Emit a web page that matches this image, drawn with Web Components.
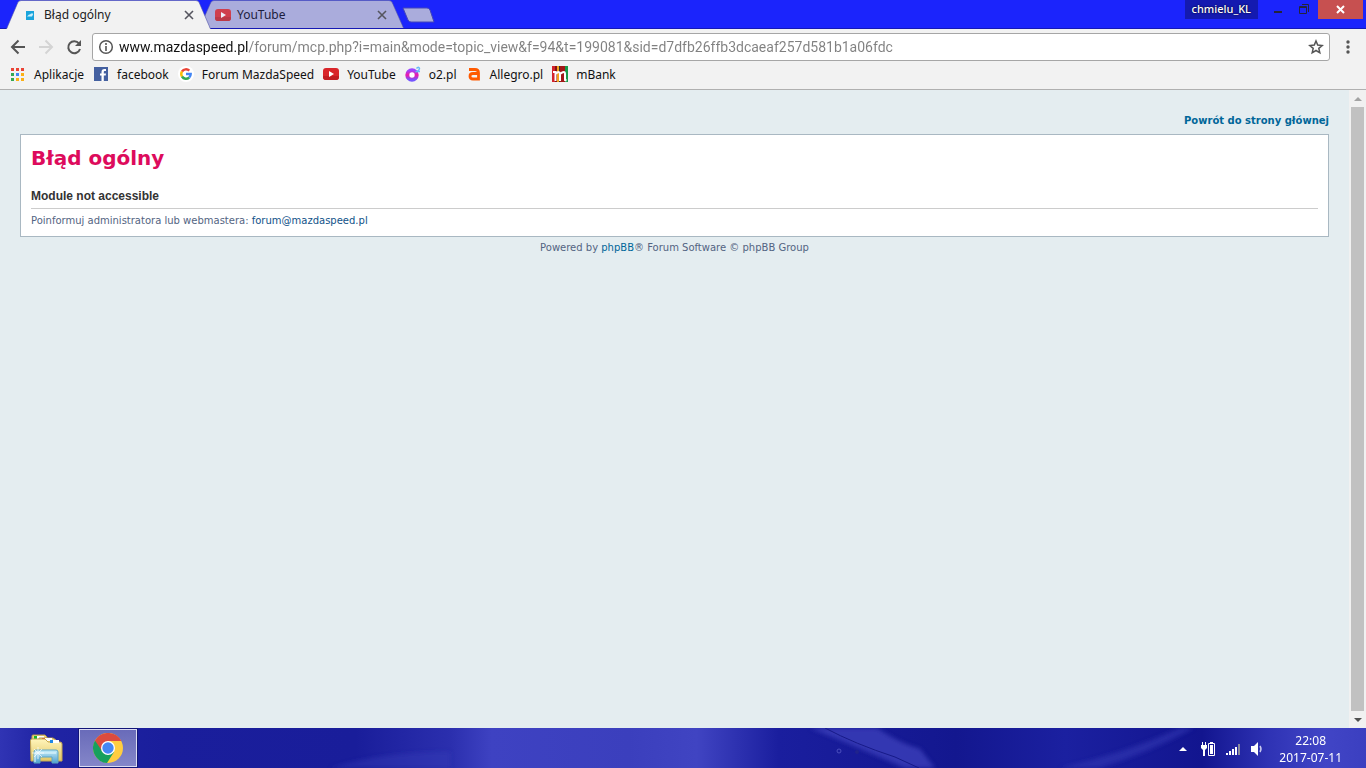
<!DOCTYPE html>
<html lang="pl">
<head>
<meta charset="utf-8">
<title>Błąd ogólny</title>
<style>
body {
	margin: 0;
	background: #e4edf0;
	font-family: "Noto Sans", "Open Sans", sans-serif;
	font-size: 12px;
}
</style>
</head>
<body>
<desktop-screen>
	<browser-window>
		<tab-strip slot="tabs" user="chmielu_KL">
			<browser-tab active label="Błąd ogólny"><site-icon name="mazda"></site-icon></browser-tab>
			<browser-tab label="YouTube"><site-icon name="youtube"></site-icon></browser-tab>
		</tab-strip>
		<address-bar slot="address" url="www.mazdaspeed.pl/forum/mcp.php?i=main&amp;mode=topic_view&amp;f=94&amp;t=199081&amp;sid=d7dfb26ffb3dcaeaf257d581b1a06fdc"></address-bar>
		<bookmark-bar slot="bookmarks">
			<book-mark icon="apps">Aplikacje</book-mark>
			<book-mark icon="facebook">facebook</book-mark>
			<book-mark icon="google">Forum MazdaSpeed</book-mark>
			<book-mark icon="youtube">YouTube</book-mark>
			<book-mark icon="o2">o2.pl</book-mark>
			<book-mark icon="allegro">Allegro.pl</book-mark>
			<book-mark icon="mbank">mBank</book-mark>
		</bookmark-bar>
		<error-page heading="Błąd ogólny" message="Module not accessible"></error-page>
	</browser-window>
	<task-bar slot="taskbar"></task-bar>
</desktop-screen>

<script>
const icons = {
	mazda: `<rect x="4" y="4" width="8" height="9" fill="#19a4dc"/><path d="M5 9.500l2-2h1l1-1h2v1l-1 2H5z" fill="#c9effc"/>`,
	youtube: `<rect y="2" width="16" height="12" rx="3" fill="#d9252a"/><path d="M0 10v1a3 3 0 0 0 3 3h10a3 3 0 0 0 3-3v-1z" fill="#c11d22"/><path d="M6 5l5 3-5 3z" fill="#fff"/>`,
	apps: `<path fill="#ea4335" d="M1 2h3v3H1zM6 2h3v3H6zM11 2h3v3h-3z"/><path fill="#34a853" d="M1 7h3v3H1zM1 12h3v3H1z"/><path fill="#4285f4" d="M6 7h3v3H6z"/><path fill="#fbb016" d="M11 7h3v3h-3zM6 12h3v3H6zM11 12h3v3h-3z"/>`,
	facebook: `<rect x="1" y="1" width="14" height="14" fill="#4460a0"/><path d="M8.500 15V9.500H7v-2h1.500V6c0-2 1-3 3-3H13v2h-1c-1 0-1.200.4-1.200 1.200v1.300H13l-.3 2h-1.900V15z" fill="#fff"/>`,
	google: `<circle cx="8" cy="8" r="8" fill="#fff"/><g fill="none" stroke-width="2.400"><path d="M4 5.500A4.700 4.700 0 0 1 11.300 4.700" stroke="#ea4335"/><path d="M4 5.500A4.700 4.700 0 0 0 4 10.500" stroke="#fbbc05"/><path d="M4 10.500A4.700 4.700 0 0 0 11.200 11.500" stroke="#34a853"/><path d="M11.200 11.500A4.700 4.700 0 0 0 12.700 8H8" stroke="#4285f4"/></g>`,
	o2: `<defs><linearGradient id="o" x2="0" y2="1"><stop stop-color="#9b45ff"/><stop offset=".5" stop-color="#ef17a8"/><stop offset="1" stop-color="#7555ff"/></linearGradient></defs><circle cx="7" cy="9" r="4.700" fill="#fff" stroke="url(#o)" stroke-width="4"/><path d="M11.500 2.500q2-2.500 3 0 0 1.500-2.500 3h3" fill="none" stroke="#65b9f8" stroke-width="1.500"/>`,
	allegro: `<path d="M3 3.500h6q3.500 0 3.500 3.500v7.500M12.500 7.500H7Q4 7.500 4 10.200T7 13h5.500" fill="none" stroke="#ff5a00" stroke-width="2.800"/>`,
	mbank: `<path fill="#d3242c" d="M0 0h16v16H0z"/><path fill="#851313" d="M3 0h2v16H3z"/><path fill="#f5a11c" d="M5 0h2v16H5z"/><path fill="#333" d="M7 0h1v16H7z"/><path fill="#a11717" d="M8 0h5v16H8z"/><path fill="#169b49" d="M13 0h3v16h-3z"/><path d="M1 6h2.500v9M3.500 8q4-4 4.500 0v7M8 8q5-4 5 0v6l1.500.5" fill="none" stroke="#fff" stroke-width="2"/>`
};

function render(host, html) {
	host.attachShadow({mode: 'open'}).innerHTML = html;
}

class SiteIcon extends HTMLElement {
	connectedCallback() {
		if (this.shadowRoot) return;
		render(this, `
	<style>
	:host { display: block; flex: none; width: 16px; height: 16px; }
	svg { display: block; width: 100%; height: 100%; }
	</style>
	<svg viewBox="0 0 16 16" aria-hidden="true">${icons[this.getAttribute('name')]}</svg>`);
	}
}

class DesktopScreen extends HTMLElement {
	constructor() {
		super();
		render(this, `
	<style>
	:host { display: flex; flex-direction: column; height: 100vh; overflow: hidden; }
	::slotted(browser-window) { flex: 1; min-height: 0; }
	</style>
	<slot></slot><slot name="taskbar"></slot>`);
	}
}

class BrowserWindow extends HTMLElement {
	constructor() {
		super();
		render(this, `
	<style>
	:host { display: flex; flex-direction: column; background: #f2f2f2; }
	.view { display: flex; flex: 1; min-height: 0; border-top: 1px solid #b0b0b0; }
	.page { flex: 1; min-width: 0; overflow: hidden; background: #e4edf0; }
	</style>
	<slot name="tabs"></slot>
	<slot name="address"></slot>
	<slot name="bookmarks"></slot>
	<div class="view">
		<div class="page"><slot></slot></div>
		<scroll-track></scroll-track>
	</div>`);
	}
}

class TabStrip extends HTMLElement {
	connectedCallback() {
		if (this.shadowRoot) return;
		render(this, `
	<style>
	:host { display: flex; height: 28px; padding-left: 6px; background: #1b24fc; border-bottom: 1px solid #1519b4; }
	button { border: 0; padding: 0; background: none; color: inherit; font: inherit; }
	.new { width: 33px; height: 16px; margin: 7px 0 0 -2px; }
	.controls { display: flex; align-items: flex-start; margin-left: auto; padding-right: 3px; }
	.user { padding: 0 7px 2px; height: 19px; background: #141ab0; color: #fff; font-size: 11px; font-weight: 500; text-shadow: 0 0 2px #000; }
	.box { width: 26px; height: 19px; }
	.user + .box { margin-left: 7px; }
	.close { width: 45px; height: 19px; background: #c75050; margin-left: 1px; }
	svg { display: block; margin: auto; }
	</style>
	<slot></slot>
	<button class="new" aria-label="Nowa karta"><svg width="33" height="16"><path d="M1 1h24q2 0 3 2l4 12H9q-2 0-3-2z" fill="#aaacdc" stroke="#4447b8"/></svg></button>
	<div class="controls">
		<button class="user">${this.getAttribute('user')}</button>
		<button class="box" aria-label="Minimalizuj"><svg width="26" height="19"><path d="M9 11h8v2H9z" fill="#24243c"/></svg></button>
		<button class="box" aria-label="Przywróć"><svg width="26" height="19"><path d="M8.500 6.500h7v7h-7zM11 4.500h6.500V12M8 7.500h8" fill="none" stroke="#24243c"/></svg></button>
		<button class="close" aria-label="Zamknij"><svg width="45" height="19"><path d="M19 6l7 7M26 6l-7 7" stroke="#fff" stroke-width="2"/></svg></button>
	</div>`);
	}
}

class BrowserTab extends HTMLElement {
	connectedCallback() {
		if (this.shadowRoot) return;
		render(this, `
	<style>
	:host { position: relative; display: flex; align-items: center; gap: 6px; box-sizing: border-box; width: 205px; height: 29px; padding: 0 14px 0 16px; color: #1c1d3d; --fill: #aaacdc; }
	:host([active]) { z-index: 1; color: #222; --fill: #f2f2f2; }
	:host(:not([active])) { margin-left: -12px; }
	:host(:not([active])) .shape { height: 28px; }
	:host(:not([active])) slot { opacity: .8; }
	.shape { position: absolute; inset: 0; width: 100%; height: 100%; }
	.shape path { fill: var(--fill); stroke: #4f52a8; stroke-opacity: .6; }
	slot, span, button { position: relative; }
	slot { display: block; }
	span { flex: 1; }
	button { width: 16px; height: 16px; padding: 0; border: 0; background: none; }
	button svg { display: block; }
	</style>
	<svg class="shape" viewBox="0 0 205 29" preserveAspectRatio="none"><path d="M0 29.500q1-1 2-4l9-21q1-4 4-4h175q3 0 4 4l9 21q1 3 2 4"/></svg>
	<slot></slot>
	<span>${this.getAttribute('label')}</span>
	<button aria-label="Zamknij kartę"><svg width="16" height="16"><path d="M4 4l8 8M12 4l-8 8" stroke="#55555f" stroke-width="1.600"/></svg></button>`);
	}
}

class AddressBar extends HTMLElement {
	connectedCallback() {
		if (this.shadowRoot) return;
		const url = this.getAttribute('url');
		render(this, `
	<style>
	:host { display: flex; align-items: center; padding: 4px 10px 3px 10px; }
	button { flex: none; width: 16px; height: 16px; padding: 0; border: 0; background: none; }
	svg { display: block; fill: none; stroke: #555; stroke-width: 2; }
	.nav { display: flex; gap: 12px; margin-right: 10px; }
	.field { flex: 1; display: flex; align-items: center; gap: 5px; height: 26px; padding: 0 5px; background: #fff; border: 1px solid #a6a6a6; border-radius: 3px; }
	input {
		flex: 1; min-width: 0; padding: 0; border: 0; outline: 0;
		font: 14px/24px Roboto, "Noto Sans", sans-serif; color: #808080;
		/* host name dark, the rest of the url grey */
		background: linear-gradient(to right, #111 var(--host), #808080 var(--host));
		-webkit-background-clip: text; background-clip: text;
		-webkit-text-fill-color: transparent;
	}
	.menu { margin-left: 10px; }
	</style>
	<div class="nav">
		<button aria-label="Wstecz"><svg width="16" height="16"><path d="M15 8H2.500M8.500 1.500L2 8l6.500 6.500"/></svg></button>
		<button aria-label="Dalej"><svg width="16" height="16" style="stroke:#d4d4d4"><path d="M1 8h12.500M7.500 1.500L14 8l-6.500 6.500"/></svg></button>
		<button aria-label="Odśwież"><svg width="16" height="16"><path d="M13 4.500A6 6 0 1 0 14 10"/><path d="M15 1v6H9z" fill="#555" stroke="none"/></svg></button>
	</div>
	<div class="field">
		<button aria-label="Informacje o stronie"><svg width="16" height="16"><circle cx="8" cy="8" r="6.300" stroke-width="1.500"/><path d="M8 7v5M8 4v2" stroke-width="1.600"/></svg></button>
		<input type="text" aria-label="Adres" spellcheck="false">
		<button aria-label="Dodaj zakładkę"><svg width="16" height="16"><path stroke-width="1.500" d="M8 2l1.700 4.100 4.500.4-3.400 2.900 1 4.400L8 11.500l-3.800 2.300 1-4.400-3.400-2.900 4.500-.4z"/></svg></button>
	</div>
	<button class="menu" aria-label="Menu"><svg width="16" height="16" style="fill:#555;stroke:none"><circle cx="8" cy="3" r="1.700"/><circle cx="8" cy="8" r="1.700"/><circle cx="8" cy="13" r="1.700"/></svg></button>`);

		const input = this.shadowRoot.querySelector('input');
		input.value = url;
		const ctx = document.createElement('canvas').getContext('2d');
		ctx.font = '14px Roboto, "Noto Sans", sans-serif';
		input.style.setProperty('--host', Math.round(ctx.measureText(url.split('/')[0]).width) + 'px');
	}
}

class BookmarkBar extends HTMLElement {
	constructor() {
		super();
		render(this, `
	<style>
	:host { display: flex; align-items: center; gap: 9px; height: 20px; padding: 0 10px 5px; }
	</style>
	<slot></slot>`);
	}
}

class BookMark extends HTMLElement {
	connectedCallback() {
		if (this.shadowRoot) return;
		render(this, `
	<style>
	a { display: flex; align-items: center; gap: 8px; color: #111; text-decoration: none; white-space: nowrap; }
	</style>
	<a href="#"><site-icon name="${this.getAttribute('icon')}"></site-icon><slot></slot></a>`);
	}
}

class ErrorPage extends HTMLElement {
	connectedCallback() {
		if (this.shadowRoot) return;
		render(this, `
	<style>
	:host { display: block; padding: 24px 20px; font: 10px/14px "DejaVu Sans", Verdana, sans-serif; color: #536482; }
	a { color: #006699; text-decoration: none; }
	.back { display: block; text-align: right; font-weight: bold; }
	main { margin-top: 6px; padding: 10px 10px 8px; background: #fff; border: 1px solid #a9b8c2; }
	h1 { margin: 0; color: #dd0b5c; font-size: 20px; line-height: 26px; }
	h2 { margin: 17px 0 4px; color: #333; font: bold 12px/16px "Liberation Sans", Arial, sans-serif; }
	p { margin: 0; padding-top: 5px; border-top: 1px solid #ccc; }
	footer { padding-top: 4px; text-align: center; }
	p a { color: #105289; }
	</style>
	<a class="back" href="#">Powrót do strony głównej</a>
	<main>
		<h1>${this.getAttribute('heading')}</h1>
		<h2>${this.getAttribute('message')}</h2>
		<p>Poinformuj administratora lub webmastera: <a href="mailto:forum@mazdaspeed.pl">forum@mazdaspeed.pl</a></p>
	</main>
	<footer>Powered by <a href="#">phpBB</a>® Forum Software © phpBB Group</footer>`);
	}
}

class ScrollTrack extends HTMLElement {
	constructor() {
		super();
		render(this, `
	<style>
	:host { display: flex; flex-direction: column; width: 17px; background: #f1f1f1; }
	button { height: 17px; padding: 0; border: 0; background: none; }
	svg { display: block; }
	.thumb { flex: 1; margin: 0 2px; background: #c1c1c1; }
	</style>
	<button aria-label="W górę"><svg width="17" height="17"><path d="M5 11l4-4 4 4z" fill="#a3a3a3"/></svg></button>
	<div class="thumb"></div>
	<button aria-label="W dół"><svg width="17" height="17"><path d="M5 7l4 4 4-4z" fill="#505050"/></svg></button>`);
	}
}

class TaskBar extends HTMLElement {
	constructor() {
		super();
		render(this, `
	<style>
	:host { position: relative; display: flex; align-items: center; height: 40px; color: #fff; background: linear-gradient(90deg, #3034b4 0, #2024a4 3%, #1a1e9c 12%, #191d9a 26%, #2b2fae 33%, #3e42c2 36%, #3b3fbd 46%, #4044c2 51%, #1a1e9e 57%, #13178f 70%, #1b20a0 78%, #12158f 88%, #2f33b5 93%, #4145c6 97%, #3b3fc0 100%); }
	.wall { position: absolute; inset: 0; width: 100%; height: 100%; }
	button { position: relative; padding: 0; border: 0; background: none; }
	svg { display: block; }
	.files { width: 34px; margin: 3px 0 0 29px; }
	.chrome { width: 58px; height: 38px; margin-left: 16px; border: 1px solid #dcdcf2; background: linear-gradient(#696bb9, #8486c9); outline: 1px solid #111579; }
	.chrome svg { margin: auto; }
	.tray { position: relative; display: flex; align-items: center; gap: 9px; margin-left: auto; padding: 2px 24px 0 0; }
	.clock { margin-left: 4px; text-align: center; line-height: 17px; }
	</style>
	<svg class="wall" viewBox="0 0 1366 40" preserveAspectRatio="none" aria-hidden="true">
		<defs><filter id="soft"><feGaussianBlur stdDeviation="2"/></filter></defs>
		<g filter="url(#soft)">
			<path d="M810 0h67q22 15 43 21l15 19h-30q-55-24-95-40z" fill="#3b40b9" opacity=".8"/>
			<path d="M1060 40q65-15 120-40h14q-45 25-95 40z" fill="#3338b3" opacity=".6"/>
			<path d="M330 40q50-16 120-16v16z" fill="#393db8" opacity=".4"/>
		</g>
		<path d="M825 0q30 16 70 29l24 11" fill="none" stroke="#171a88"/>
		<circle cx="839" cy="23" r="2" fill="none" stroke="#4b4fbd"/><circle cx="857" cy="24" r="2" fill="#20238c"/>
	</svg>
	<button class="files" aria-label="Eksplorator plików">
		<svg width="34" height="32" viewBox="0 0 34 32">
			<defs><linearGradient id="f" x2="0" y2="1"><stop stop-color="#fff5bb"/><stop offset="1" stop-color="#e2c767"/></linearGradient>
			<linearGradient id="b" x2="0" y2="1"><stop stop-color="#c6eefa"/><stop offset="1" stop-color="#4f9fce"/></linearGradient></defs>
			<path d="M3 7V2q0-1 1-1h12l2 2v5z" fill="#eed883" stroke="#b99b4b"/><path d="M5 2h3v3H5z" fill="#17b52c"/><path d="M8 2h7v3H8z" fill="#fff"/>
			<path d="M10 9V4h14l3 2v6H10z" fill="#eed883" stroke="#b99b4b"/><path d="M13 4h3v3h-3z" fill="#da4122"/><path d="M16 4h7v3h-7z" fill="#fff"/>
			<path d="M1.500 6.500Q1.500 5 3 5h13l3 3h12q2 0 2 2v17H2z" fill="url(#f)" stroke="#c5a750"/><path d="M21 6h3v3h-3z" fill="#1e87e6"/><path d="M24 6h6v3h-6z" fill="#fff"/>
			<path d="M5 29V18q0-2 2-2h20q2 0 2 2v11h-6v-6H11v6z" fill="url(#b)" stroke="#5ca6c6"/>
			<path d="M6 19h21M6 19v9" stroke="#e7fbff" fill="none"/><path d="M9 13v12M3 19h12M5 15l8 8M13 15l-8 8" stroke="#fff" opacity=".7"/>
		</svg>
	</button>
	<button class="chrome" aria-label="Google Chrome">
		<svg width="30" height="30" viewBox="0 0 30 30">
			<circle cx="15" cy="15" r="15" fill="#ffcd40"/>
			<path d="M15 15L2 7.500A15 15 0 0 0 14 30l7-11z" fill="#16a05d"/>
			<path d="M2 7.500A15 15 0 0 1 28.300 8H15l-6 10z" fill="#dc4b3e"/>
			<circle cx="15" cy="15" r="7" fill="#fff"/><circle cx="15" cy="15" r="5.700" fill="#4587f3"/>
		</svg>
	</button>
	<div class="tray">
		<button aria-label="Pokaż ukryte ikony"><svg width="16" height="16"><path d="M4 10l4-4 4 4z" fill="#fff"/></svg></button>
		<button aria-label="Bateria"><svg width="16" height="16"><path d="M2 1h1v3H2zM5 1h1v3H5zM1 4h6v3l-2 2v6H3V9L1 7z" fill="#fff"/><path d="M8.500 2.500h6v12h-6z" fill="none" stroke="#fff"/><path d="M10 1h3v1h-3zM10 4h3v9h-3z" fill="#fff"/></svg></button>
		<button aria-label="Sieć"><svg width="16" height="16"><path d="M1 12h2v2H1zM4 10h2v4H4zM7 8h2v6H7zM10 6h2v8h-2z" fill="#fff"/><path d="M13 3h2v11h-2z" fill="#8b8b9e"/></svg></button>
		<button aria-label="Głośność"><svg width="16" height="16"><path d="M1 5h3v6H1zM4 5l4-4v14l-4-4z" fill="#fff"/><path d="M10 5q2 3 0 6" fill="none" stroke="#c8c9ef" stroke-width="1.500"/></svg></button>
		<div class="clock"><div>22:08</div><div>2017-07-11</div></div>
	</div>`);
	}
}

customElements.define('site-icon', SiteIcon);
customElements.define('desktop-screen', DesktopScreen);
customElements.define('browser-window', BrowserWindow);
customElements.define('tab-strip', TabStrip);
customElements.define('browser-tab', BrowserTab);
customElements.define('address-bar', AddressBar);
customElements.define('bookmark-bar', BookmarkBar);
customElements.define('book-mark', BookMark);
customElements.define('error-page', ErrorPage);
customElements.define('scroll-track', ScrollTrack);
customElements.define('task-bar', TaskBar);
</script>
</body>
</html>
